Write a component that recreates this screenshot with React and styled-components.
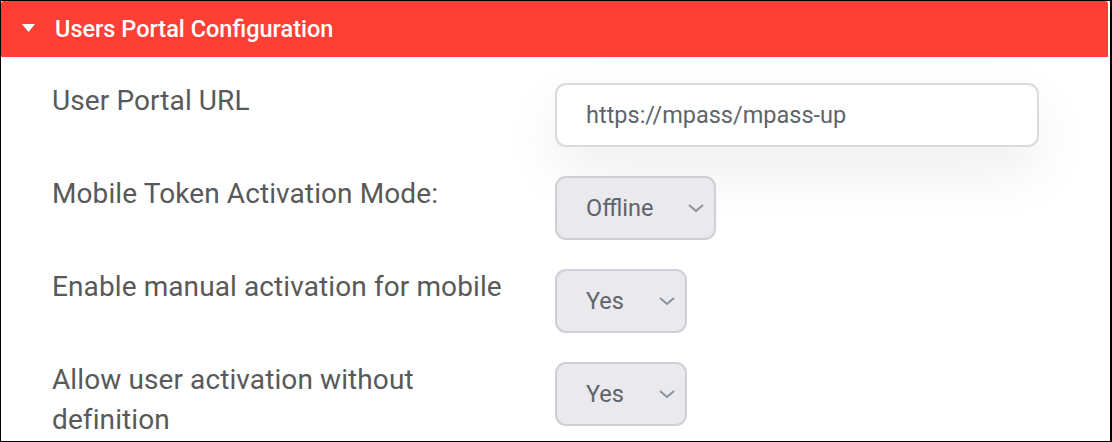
import React from "react";
import styled, { createGlobalStyle } from "styled-components";

const GlobalStyle = createGlobalStyle`
  html, body {
    margin: 0;
    padding: 0;
    background: #fff;
  }
  body {
    font-family: Roboto, "Liberation Sans", Arial, sans-serif;
  }
`;

const Frame = styled.div`
  width: 1112px;
  height: 442px;
  box-sizing: border-box;
  border: 1px solid #000;
  border-right-width: 2px;
  overflow: hidden;
  background: #fff;
`;

const Panel = styled.section`
  width: 1107px;
  display: flex;
  flex-direction: column;
`;

const PanelHeader = styled.header`
  height: 56px;
  background: #fe3f35;
  border-radius: 3px 3px 0 0;
  display: flex;
  align-items: center;
  padding-left: 21px;
  color: #fff;
  font-size: 23.5px;
  font-weight: 500;
  & svg {
    margin-right: 20px;
    margin-top: -1px;
  }
`;

const Form = styled.div`
  display: flex;
  flex-direction: column;
  gap: 29px;
  padding: 26px 0 0 51px;
`;

const Row = styled.div`
  display: flex;
  align-items: flex-start;
`;

const Label = styled.div`
  width: 474px;
  margin-right: 29px;
  font-size: 28px;
  letter-spacing: 0.1px;
  line-height: 40px;
  color: #595959;
  margin-top: -2px;
`;

const TextInput = styled.input`
  box-sizing: border-box;
  width: 484px;
  height: 64px;
  border: 2px solid #d7dadf;
  border-radius: 11px;
  padding: 0 29px;
  font-family: Roboto, "Liberation Sans", Arial, sans-serif;
  font-size: 23.5px;
  color: #5f646b;
  background: #fff;
  box-shadow: 0 24px 60px rgba(0, 0, 0, 0.07);
  outline: none;
`;

const Select = styled.div`
  box-sizing: border-box;
  width: ${(props) => props.width}px;
  height: 64px;
  border: 2px solid #cdd0d5;
  border-radius: 11px;
  background: #e9e9ee;
  display: flex;
  align-items: center;
  justify-content: space-between;
  padding: 0 9px 0 29px;
  font-size: 23.5px;
  color: #5f646b;
`;

const Caret = () => (
  <svg width="13" height="9" viewBox="0 0 13 9">
    <polygon points="0,0 13,0 6.5,8" fill="#fff" />
  </svg>
);

const Chevron = () => (
  <svg width="18" height="10" viewBox="0 0 18 10">
    <polyline
      points="2,2 9,8 16,2"
      fill="none"
      stroke="#8b919a"
      strokeWidth="2"
    />
  </svg>
);

const rows = [
  { label: "Mobile Token Activation Mode:", value: "Offline", width: 161 },
  { label: "Enable manual activation for mobile", value: "Yes", width: 132 },
  { label: "Allow user activation without definition", value: "Yes", width: 132 },
];

export default function App() {
  return (
    <>
      <GlobalStyle />
      <Frame>
        <Panel>
          <PanelHeader>
            <Caret />
            Users Portal Configuration
          </PanelHeader>
          <Form>
            <Row>
              <Label>User Portal URL</Label>
              <TextInput defaultValue="https://mpass/mpass-up" />
            </Row>
            {rows.map((row) => (
              <Row key={row.label}>
                <Label>{row.label}</Label>
                <Select width={row.width}>
                  <span>{row.value}</span>
                  <Chevron />
                </Select>
              </Row>
            ))}
          </Form>
        </Panel>
      </Frame>
    </>
  );
}
